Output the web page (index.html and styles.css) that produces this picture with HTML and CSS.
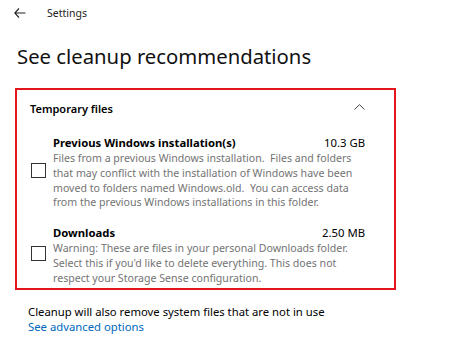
FILE: index.html
```html
<!DOCTYPE html>
<html lang="en">
<head>
  <meta charset="UTF-8">
  <title>Settings</title>
  <link rel="stylesheet" href="styles.css">
</head>
<body>

<div class="topbar">
  <svg class="back" width="12" height="10" viewBox="0 0 12 10"><path d="M5 0.5 L0.8 5 L5 9.5 M0.8 5 H11.5" fill="none" stroke="#222" stroke-width="1.1"/></svg>
  <span class="app-name">Settings</span>
</div>

<h1 class="page-title">See cleanup recommendations</h1>

<div class="group">
  <div class="group-head">
    <span>Temporary files</span>
    <svg class="chevron" width="11" height="6" viewBox="0 0 11 6"><path d="M0.5 5.5 L5.5 0.7 L10.5 5.5" fill="none" stroke="#444" stroke-width="1"/></svg>
  </div>

  <div class="item">
    <div class="check"></div>
    <div class="item-body">
      <div class="item-top">
        <span class="item-name">Previous Windows installation(s)</span>
        <span class="item-size">10.3 GB</span>
      </div>
      <p class="item-desc">Files from a previous Windows installation.&nbsp; Files and folders that may conflict with the installation of Windows have been moved to folders named Windows.old.&nbsp; You can access data from the previous Windows installations in this folder.</p>
    </div>
  </div>

  <div class="item">
    <div class="check"></div>
    <div class="item-body">
      <div class="item-top">
        <span class="item-name">Downloads</span>
        <span class="item-size">2.50 MB</span>
      </div>
      <p class="item-desc">Warning: These are files in your personal Downloads folder. Select this if you'd like to delete everything. This does not respect your Storage Sense configuration.</p>
    </div>
  </div>
</div>

<p class="note">Cleanup will also remove system files that are not in use</p>
<a class="link" href="#">See advanced options</a>

</body>
</html>
```

FILE: styles.css
```css
* { box-sizing: border-box; }
body { margin: 0; padding: 0; background: #fff; color: #000; font-family: "Noto Sans", "Open Sans", sans-serif; font-size: 11.5px; }

.topbar { display: flex; align-items: center; height: 26px; padding-left: 14px; }
.back { margin-right: 21px; }
.app-name { font-size: 10.5px; color: #222; }

.page-title { margin: 16px 0 0 17px; font-size: 20.3px; font-weight: normal; line-height: 28px; color: #111; }

.group { margin: 18px 0 0 15px; width: 381px; height: 202px; border: 2px solid #e3151d; padding: 8px 29px 0 13px; }
.group-head { display: flex; justify-content: space-between; align-items: center; height: 20px; font-weight: 600; font-size: 11px; }
.chevron { margin-top: -2px; }

.item { display: flex; align-items: center; margin-top: 17px; }
.item + .item { margin-top: 15px; }
.check { width: 15px; height: 15px; border: 1.5px solid #333; flex-shrink: 0; margin: -4px 7px 0 1px; }
.item-body { flex: 1; }
.item-top { display: flex; justify-content: space-between; line-height: 16px; }
.item-name { font-weight: bold; font-size: 11.3px; }
.item-size { font-size: 11.3px; }
.item-desc { margin: 0; color: #737373; line-height: 14.8px; font-size: 10.6px; }

.note { margin: 14px 0 0 28px; font-size: 11.3px; line-height: 15px; }
.link { display: block; margin-left: 28px; color: #0067c0; text-decoration: none; font-size: 11.3px; line-height: 15px; }
```
